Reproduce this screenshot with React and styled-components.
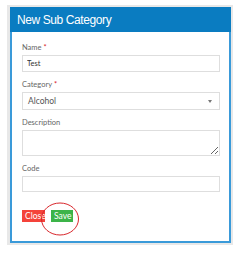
import styled, { createGlobalStyle } from "styled-components";

const GlobalStyle = createGlobalStyle`
  html, body {
    margin: 0;
    padding: 0;
    background: #ffffff;
  }
  body {
    font-family: Lato, "Open Sans", sans-serif;
  }
`;

const Frame = styled.div`
  margin: 5px 0 0 7px;
  width: 226px;
  padding: 2px 2px 2px 3px;
  box-sizing: border-box;
  background: #e8e8e8;
`;

const Panel = styled.div`
  border: 2px solid #3a9ad9;
  border-top: none;
  background: #ffffff;
`;

const Header = styled.div`
  height: 25px;
  margin: 0 -2px;
  background: #0a7cc1;
  display: flex;
  align-items: center;
  padding: 0 0 0 7px;
  h1 {
    margin: 0;
    color: #ffffff;
    font-family: "Liberation Sans", Arial, sans-serif;
    font-weight: normal;
    font-size: 12px;
    letter-spacing: -0.4px;
  }
`;

const Body = styled.div`
  padding: 11px 9px 19px 10px;
  display: flex;
  flex-direction: column;
`;

const Field = styled.div`
  display: flex;
  flex-direction: column;
  margin-bottom: 8px;
`;

const Label = styled.label`
  font-size: 7.5px;
  line-height: 10px;
  color: #666666;
  margin-bottom: 2px;
  span {
    color: #d9262b;
    margin-left: 2px;
  }
`;

const TextInput = styled.input`
  box-sizing: border-box;
  width: 100%;
  height: ${(p) => p.$h || 17}px;
  border: 1px solid #dedede;
  padding: 0 4px;
  margin: 0;
  font-family: Lato, sans-serif;
  font-size: 7.5px;
  color: #333333;
  outline: none;
`;

const Select = styled.div`
  box-sizing: border-box;
  height: 18px;
  border: 1px solid #dedede;
  padding: 0 7px 0 5px;
  display: flex;
  align-items: center;
  justify-content: space-between;
  font-size: 8.5px;
  color: #555555;
`;

const Arrow = styled.i`
  width: 0;
  height: 0;
  border-left: 2.5px solid transparent;
  border-right: 2.5px solid transparent;
  border-top: 3px solid #777777;
`;

const TextArea = styled.textarea`
  box-sizing: border-box;
  width: 100%;
  height: 26px;
  border: 1px solid #dedede;
  margin: 0;
  display: block;
  outline: none;
`;

const Actions = styled.div`
  display: flex;
  gap: 6px;
  margin-top: 9.5px;
  position: relative;
`;

const Button = styled.button`
  box-sizing: border-box;
  height: 12px;
  width: ${(p) => p.$w}px;
  border: none;
  margin: 0;
  padding: 0 0 0 3px;
  background: ${(p) => p.$bg};
  color: #ffffff;
  font-family: Lato, sans-serif;
  font-size: 8.5px;
  line-height: 12px;
  text-align: left;
  white-space: nowrap;
  overflow: hidden;
  position: relative;
`;

const Circle = styled.svg`
  position: absolute;
  left: 18px;
  top: -8px;
  pointer-events: none;
`;

export default function App() {
  return (
    <>
      <GlobalStyle />
      <Frame>
        <Panel>
          <Header>
            <h1>New Sub Category</h1>
          </Header>
          <Body>
            <Field>
              <Label>
                Name<span>*</span>
              </Label>
              <TextInput defaultValue="Test" />
            </Field>
            <Field>
              <Label>
                Category<span>*</span>
              </Label>
              <Select>
                Alcohol
                <Arrow />
              </Select>
            </Field>
            <Field>
              <Label>Description</Label>
              <TextArea />
            </Field>
            <Field>
              <Label>Code</Label>
              <TextInput $h={16} />
            </Field>
            <Actions>
              <Button $w={23} $bg="#f4433a">
                Close
              </Button>
              <Button $w={22} $bg="#3cb449">
                Save
              </Button>
              <Circle width="40" height="34" viewBox="0 0 40 34">
                <ellipse
                  cx="20"
                  cy="17"
                  rx="18.5"
                  ry="16"
                  fill="none"
                  stroke="#d9262b"
                  strokeWidth="1"
                />
              </Circle>
            </Actions>
          </Body>
        </Panel>
      </Frame>
    </>
  );
}
